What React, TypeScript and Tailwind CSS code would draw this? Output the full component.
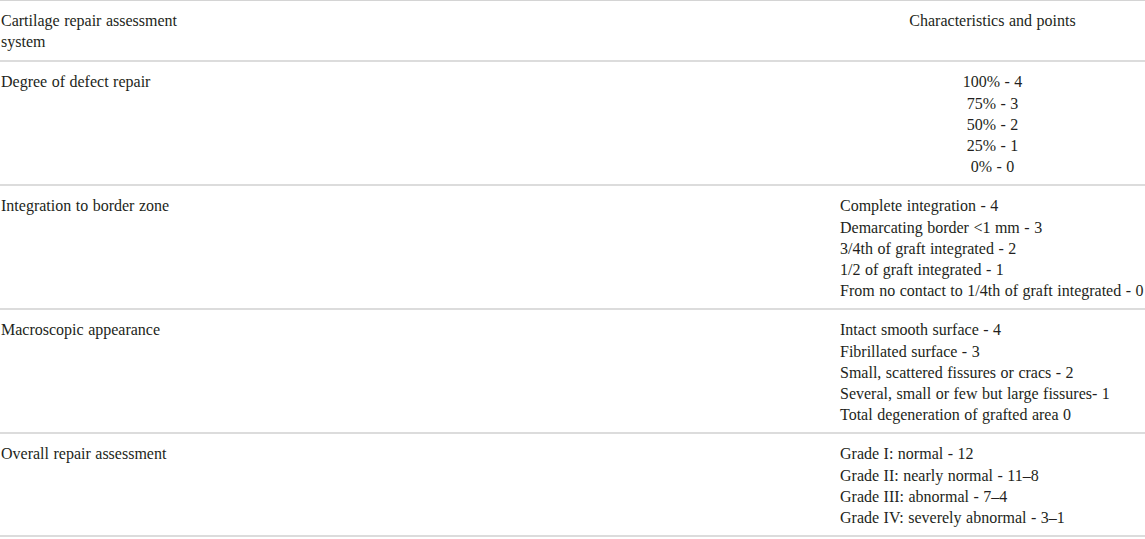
import React from "react";

const rows = [
  {
    label: "Degree of defect repair",
    center: true,
    items: ["100% - 4", "75% - 3", "50% - 2", "25% - 1", "0% - 0"],
  },
  {
    label: "Integration to border zone",
    items: [
      "Complete integration - 4",
      "Demarcating border <1 mm - 3",
      "3/4th of graft integrated - 2",
      "1/2 of graft integrated - 1",
      "From no contact to 1/4th of graft integrated - 0",
    ],
  },
  {
    label: "Macroscopic appearance",
    items: [
      "Intact smooth surface - 4",
      "Fibrillated surface - 3",
      "Small, scattered fissures or cracs - 2",
      "Several, small or few but large fissures- 1",
      "Total degeneration of grafted area 0",
    ],
  },
  {
    label: "Overall repair assessment",
    items: [
      "Grade I: normal - 12",
      "Grade II: nearly normal - 11–8",
      "Grade III: abnormal - 7–4",
      "Grade IV: severely abnormal - 3–1",
    ],
  },
];

export default function App() {
  return (
    <div
      className="w-[1145px] h-[539px] bg-white text-[#231f20] text-[16px] leading-[21.2px] [word-spacing:0.5px] overflow-hidden"
      style={{ fontFamily: '"Liberation Serif", "Times New Roman", serif' }}
    >
      <div className="border-t border-[#d4d4d4]">
        <div className="grid grid-cols-[840px_1fr] border-b-2 border-[#dcdcdc] pt-[9px] pb-[8px]">
          <div className="pl-px w-[200px]">Cartilage repair assessment system</div>
          <div className="text-center">Characteristics and points</div>
        </div>
        {rows.map((row, index) => (
          <div
            key={index + 1}
            className="grid grid-cols-[840px_1fr] border-b-2 border-[#dcdcdc] pt-[9px] pb-[7px]"
          >
            <div className="pl-px">{row.label}</div>
            <div className={row.center ? "flex flex-col items-center" : "flex flex-col whitespace-nowrap"}>
              {row.items.map((item, i) => (
                <span key={i + 1}>{item}</span>
              ))}
            </div>
          </div>
        ))}
      </div>
    </div>
  );
}
